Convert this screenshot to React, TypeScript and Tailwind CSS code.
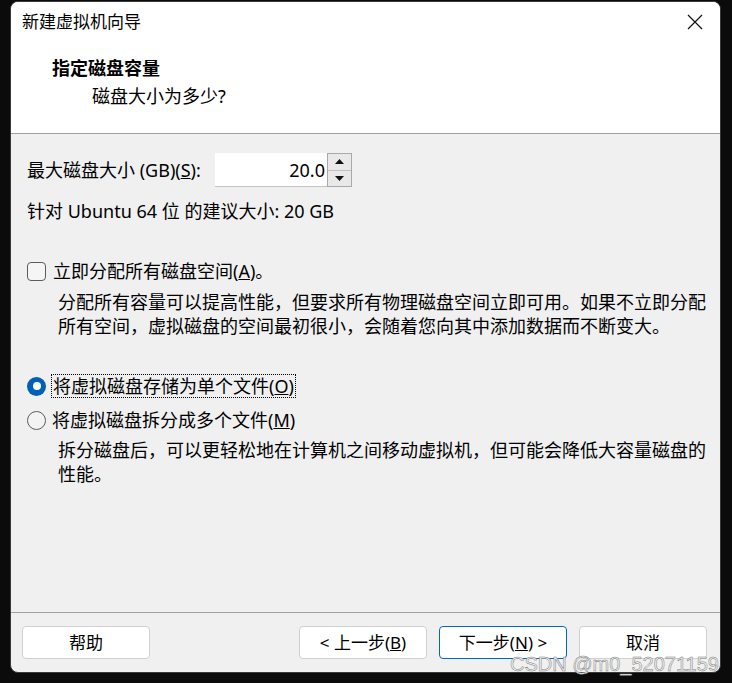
import React from 'react';

const font = "font-['Noto_Sans','Noto_Sans_CJK_SC',sans-serif]";

function Radio({ checked }: { checked: boolean }) {
  if (checked) {
    return (
      <span className="flex h-[19px] w-[19px] shrink-0 items-center justify-center rounded-full bg-[#005fb8]">
        <span className="h-[8px] w-[8px] rounded-full bg-white" />
      </span>
    );
  }
  return <span className="h-[19px] w-[19px] shrink-0 rounded-full border border-[#5c5c5c] bg-[#f3f3f3]" />;
}

function Btn({ children, primary }: { children: React.ReactNode; primary?: boolean }) {
  return (
    <button
      className={
        primary
          ? 'flex h-[33px] w-[128px] items-center justify-center rounded-[4px] border border-[#0067c0] bg-white text-[17px] leading-[20px] text-black'
          : 'flex h-[33px] w-[128px] items-center justify-center rounded-[4px] border border-[#d0d0d0] bg-white text-[17px] leading-[20px] text-black'
      }
    >
      {children}
    </button>
  );
}

export default function App() {
  return (
    <div className={`relative h-[683px] w-[732px] bg-[#0b0b0b] pb-[10px] pl-[10px] pr-[11px] pt-px ${font}`}>
      <div className="flex h-full flex-col overflow-hidden rounded-[8px] border border-[#3a3a3a] bg-[#f0f0f0] text-black">
        {/* header */}
        <div className="h-[132px] shrink-0 border-b border-[#a0a0a0] bg-white">
          <div className="flex h-[40px] items-center justify-between pl-[11px] pr-[16px]">
            <span className="text-[17px] leading-6">新建虚拟机向导</span>
            <svg width="16" height="16" viewBox="0 0 16 16" className="mr-[1px]">
              <path d="M1 1L15 15M15 1L1 15" stroke="#111" strokeWidth="1.2" fill="none" />
            </svg>
          </div>
          <div className="mt-[14px] pl-[41px] text-[18px] font-bold leading-6">指定磁盘容量</div>
          <div className="mt-[4px] pl-[81px] text-[18px] leading-6">磁盘大小为多少?</div>
        </div>

        {/* content */}
        <div className="flex-1 pl-[16px] pt-[19px] text-[18px]">
          <div className="flex items-center">
            <span className="w-[188px] leading-6">
              最大磁盘大小 (GB)(<span className="underline">S</span>):
            </span>
            <div className="flex h-[34px] w-[112px] items-center justify-end border-b border-[#c4c4c4] bg-white pr-[2px] leading-6">
              20.0
            </div>
            <div className="flex h-[34px] w-[25px] flex-col border border-[#a8a8a8] bg-[#e9e9e9]">
              <div className="flex flex-1 items-center justify-center border-b border-[#c0c0c0]">
                <svg width="9" height="5" viewBox="0 0 9 5">
                  <path d="M0 5L4.5 0L9 5Z" fill="#111" />
                </svg>
              </div>
              <div className="flex flex-1 items-center justify-center">
                <svg width="9" height="5" viewBox="0 0 9 5">
                  <path d="M0 0L4.5 5L9 0Z" fill="#111" />
                </svg>
              </div>
            </div>
          </div>
          <div className="mt-[12px] leading-6">针对 Ubuntu 64 位 的建议大小: 20 GB</div>

          <div className="mt-[36px] flex items-center gap-[7px] leading-6">
            <span className="h-[19px] w-[19px] shrink-0 rounded-[4px] border border-[#5c5c5c] bg-[#f5f5f5]" />
            <span>
              立即分配所有磁盘空间(<span className="underline">A</span>)。
            </span>
          </div>
          <div className="ml-[31px] mt-[7px] leading-6">
            分配所有容量可以提高性能，但要求所有物理磁盘空间立即可用。如果不立即分配
            <br />
            所有空间，虚拟磁盘的空间最初很小，会随着您向其中添加数据而不断变大。
          </div>

          <div className="mt-[36px] flex items-center gap-[5px] leading-6">
            <Radio checked />
            <span className="border border-dotted border-black px-px leading-[22px]">
              将虚拟磁盘存储为单个文件(<span className="underline">O</span>)
            </span>
          </div>
          <div className="mt-[10px] flex items-center gap-[6px] leading-6">
            <Radio checked={false} />
            <span>
              将虚拟磁盘拆分成多个文件(<span className="underline">M</span>)
            </span>
          </div>
          <div className="ml-[31px] mt-[6px] leading-6">
            拆分磁盘后，可以更轻松地在计算机之间移动虚拟机，但可能会降低大容量磁盘的
            <br />
            性能。
          </div>
        </div>

        {/* footer */}
        <div className="flex h-[60px] shrink-0 items-center justify-between border-t border-[#a0a0a0] pl-[11px] pr-[13px]">
          <Btn>帮助</Btn>
          <div className="flex gap-[12px]">
            <Btn>
              &lt; 上一步(<span className="underline">B</span>)
            </Btn>
            <Btn primary>
              下一步(<span className="underline">N</span>) &gt;
            </Btn>
            <Btn>取消</Btn>
          </div>
        </div>
      </div>

      {/* watermark */}
      <div className="absolute left-[510px] top-[654px] font-['Liberation_Sans',sans-serif] text-[20px] leading-[20px] text-[#f2f2f2] [-webkit-text-stroke:0.5px_#7d7d7d]">
        CSDN @m0_52071159
      </div>
    </div>
  );
}
